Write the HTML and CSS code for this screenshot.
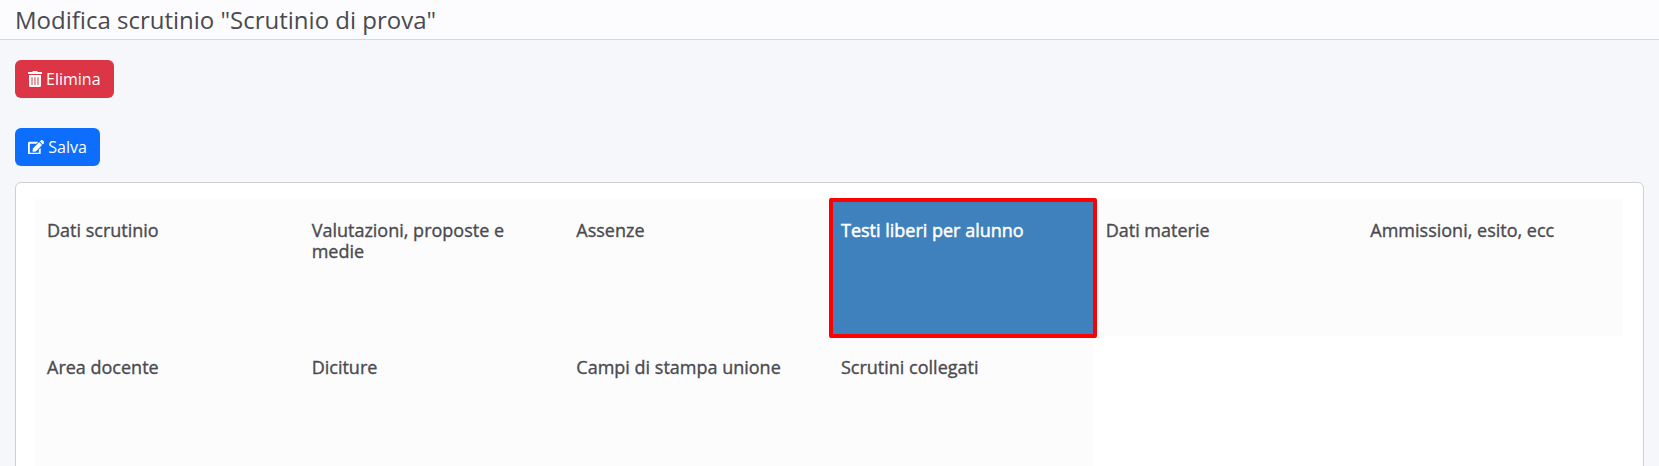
FILE: index.html
```html
<!DOCTYPE html>
<html lang="it">
<head>
  <meta charset="UTF-8">
  <title>Modifica scrutinio</title>
  <link rel="stylesheet" href="styles.css">
</head>
<body>
  <header class="page-header">
    <h1>Modifica scrutinio "Scrutinio di prova"</h1>
  </header>

  <main class="page-content">
    <div class="actions">
      <button class="btn btn-danger" type="button">
        <svg class="icon icon-trash" viewBox="0 0 448 512"><path d="M32 464a48 48 0 0 0 48 48h288a48 48 0 0 0 48-48V128H32zm272-256a16 16 0 0 1 32 0v224a16 16 0 0 1-32 0zm-96 0a16 16 0 0 1 32 0v224a16 16 0 0 1-32 0zm-96 0a16 16 0 0 1 32 0v224a16 16 0 0 1-32 0zM432 32H312l-9.4-18.7A24 24 0 0 0 281.1 0H166.8a23.72 23.72 0 0 0-21.4 13.3L136 32H16A16 16 0 0 0 0 48v32a16 16 0 0 0 16 16h416a16 16 0 0 0 16-16V48a16 16 0 0 0-16-16z"/></svg>
        Elimina
      </button>
    </div>
    <div class="actions">
      <button class="btn btn-primary" type="button">
        <svg class="icon icon-edit" viewBox="0 0 576 512"><path d="M402.6 83.2l90.2 90.2c3.8 3.8 3.8 10 0 13.8L274.4 405.6l-92.8 10.3c-12.4 1.4-22.9-9.1-21.5-21.5l10.3-92.8L388.8 83.2c3.8-3.8 10-3.8 13.8 0zm162-22.9l-48.8-48.8c-15.2-15.2-39.9-15.2-55.2 0l-35.4 35.4c-3.8 3.8-3.8 10 0 13.8l90.2 90.2c3.8 3.8 10 3.8 13.8 0l35.4-35.4c15.2-15.3 15.2-40 0-55.2zM384 346.2V448H64V128h229.8c3.2 0 6.2-1.3 8.5-3.5l40-40c7.6-7.6 2.2-20.5-8.5-20.5H48C21.5 64 0 85.5 0 112v352c0 26.5 21.5 48 48 48h352c26.5 0 48-21.5 48-48V306.2c0-10.7-12.9-16-20.5-8.5l-40 40c-2.2 2.3-3.5 5.3-3.5 8.5z"/></svg>
        Salva
      </button>
    </div>

    <section class="card">
      <ul class="tabs">
        <li class="tab">Dati scrutinio</li>
        <li class="tab">Valutazioni, proposte e medie</li>
        <li class="tab">Assenze</li>
        <li class="tab tab-active">Testi liberi per alunno</li>
        <li class="tab">Dati materie</li>
        <li class="tab">Ammissioni, esito, ecc</li>
        <li class="tab">Area docente</li>
        <li class="tab">Diciture</li>
        <li class="tab">Campi di stampa unione</li>
        <li class="tab">Scrutini collegati</li>
      </ul>
    </section>
  </main>
</body>
</html>
```

FILE: styles.css
```css
* {
  margin: 0;
  padding: 0;
  box-sizing: border-box;
}

html, body {
  height: 466px;
  overflow: hidden;
}

body {
  font-family: "Open Sans", Arial, sans-serif;
  font-size: 16px;
  background-color: #f6f7fb;
  color: #4a4a4f;
}

/* Header */
.page-header {
  height: 40px;
  padding-left: 15px;
  background-color: #fcfcfe;
  border-bottom: 1px solid #d2d7e0;
}

.page-header h1 {
  font-size: 24px;
  font-weight: 400;
  line-height: 40px;
}

/* Buttons */
.page-content {
  padding: 20px 15px 0;
}

.actions {
  margin-bottom: 30px;
}

.actions + .actions {
  margin-bottom: 16px;
}

.btn {
  display: inline-flex;
  align-items: center;
  gap: 4px;
  height: 38px;
  padding: 0 13px;
  border: none;
  border-radius: 6px;
  color: #fff;
  font-family: inherit;
  font-size: 16px;
}

.btn-danger {
  background-color: #dc3545;
}

.btn-primary {
  background-color: #0d6efd;
}

.icon {
  fill: #fff;
}

.icon-trash {
  height: 16px;
}

.icon-edit {
  height: 14.5px;
}

/* Tabs card */
.card {
  height: 400px;
  padding: 16px 20px 16px 19px;
  background-color: #fff;
  border: 1px solid #d0d0d4;
  border-radius: 6px;
}

.tabs {
  display: grid;
  grid-template-columns: repeat(6, 1fr);
  grid-auto-rows: 137px;
  list-style: none;
}

.tab {
  padding: 21px 12px;
  background-color: #fcfcfd;
  font-size: 18px;
  line-height: 21px;
  -webkit-text-stroke: 0.35px #4a4a4f;
}

/* red frame sticks out a little past its cell */
.tab-active {
  position: relative;
  z-index: 1;
  margin: -1px -3px -2px 0;
  padding: 18px 8px;
  background-color: #3f81bd;
  border: 4px solid #f00;
  border-radius: 2px;
  color: #fff;
  -webkit-text-stroke: 0.5px #fff;
}
```
